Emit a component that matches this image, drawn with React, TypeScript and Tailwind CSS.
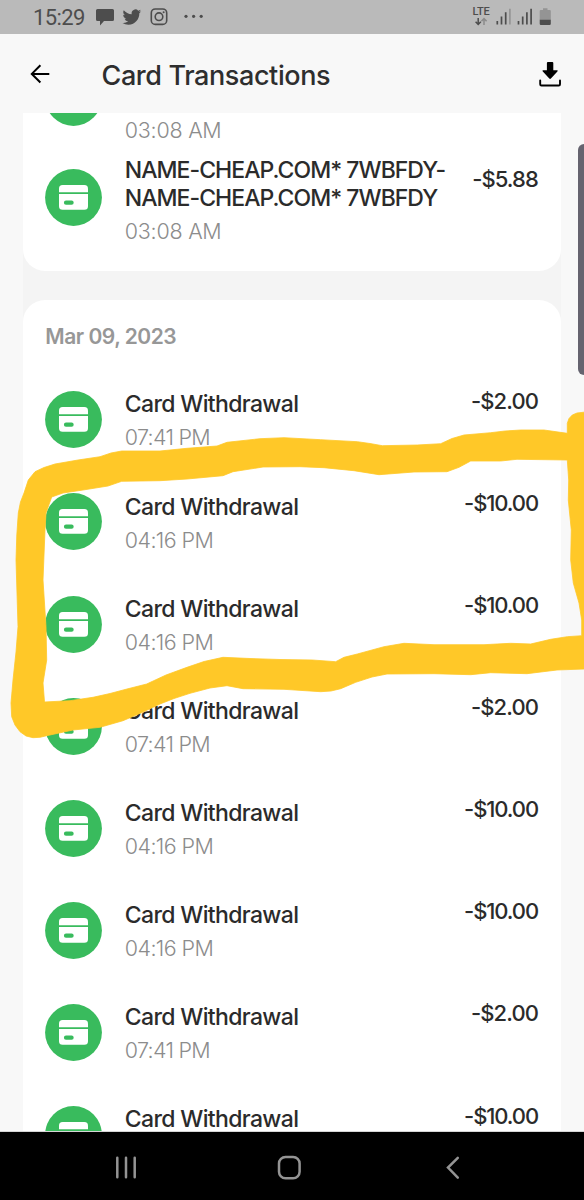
import React from "react";

const FONT = "font-['Inter','Liberation_Sans',sans-serif]";

function CardIcon() {
  return (
    <svg viewBox="0 0 57 57" className="block h-[57px] w-[57px] shrink-0">
      <circle cx="28.5" cy="28.5" r="28.4" fill="#39bb5d" />
      <path d="M14 23.3v-3.6a3.6 3.6 0 0 1 3.6-3.6h21.8a3.6 3.6 0 0 1 3.6 3.6v3.6z" fill="#fff" />
      <path
        fillRule="evenodd"
        d="M14 24.9h29v12.3a3.6 3.6 0 0 1-3.6 3.6H17.6a3.6 3.6 0 0 1-3.6-3.6zM21 31.6a2.1 2.1 0 0 0 0 4.2h5.6a2.1 2.1 0 0 0 0-4.2z"
        fill="#fff"
      />
    </svg>
  );
}

function Time({ children }: { children: string }) {
  const spacing = children.startsWith("07") ? "tracking-[-0.7px]" : children.startsWith("03") ? "tracking-[-0.25px]" : "tracking-[-0.6px]";
  return <div className={`text-[21.5px] leading-[28px] font-light whitespace-nowrap text-[#8c8c8c] ${spacing}`}>{children}</div>;
}

function Amount({ children }: { children: string }) {
  const spacing = children.length > 6 ? "tracking-[-1.1px]" : "tracking-[-0.9px]";
  return <div className={`text-[22px] leading-[28px] font-medium whitespace-nowrap text-[#2b2b2b] ${spacing}`}>{children}</div>;
}

function Withdrawal({ time, amount }: { time: string; amount: string }) {
  return (
    <div className="flex h-[102.17px] shrink-0 items-start">
      <div className="pt-[4.8px]">
        <CardIcon />
      </div>
      <div className="ml-[22.5px] flex flex-1 flex-col gap-[4.2px] pt-[3.9px]">
        <div className="text-[23px] leading-[28.8px] font-medium tracking-[-0.65px] whitespace-nowrap text-[#2b2b2b]">Card Withdrawal</div>
        <Time>{time}</Time>
      </div>
      <Amount>{amount}</Amount>
    </div>
  );
}

const entries = [
  ["07:41 PM", "-$2.00"],
  ["04:16 PM", "-$10.00"],
  ["04:16 PM", "-$10.00"],
  ["07:41 PM", "-$2.00"],
  ["04:16 PM", "-$10.00"],
  ["04:16 PM", "-$10.00"],
  ["07:41 PM", "-$2.00"],
];

function StatusBar() {
  return (
    <div className="flex h-[34px] shrink-0 items-center bg-[#bababa] pr-[32px] pl-[33px] text-[#4d4d4d]">
      <span className="w-[52px] pt-px font-['Roboto',sans-serif] text-[22px] leading-[34px] tracking-[-0.6px] whitespace-nowrap">15:29</span>
      <svg viewBox="0 0 112 34" className="ml-[9px] h-[34px] w-[112px]">
        <path d="M3.500 9h15a1.500 1.500 0 0 1 1.500 1.500v9a1.500 1.500 0 0 1-1.500 1.500h-8.500l-4 4.500v-4.500h-2.500a1.500 1.500 0 0 1-1.500-1.500v-9a1.500 1.500 0 0 1 1.500-1.500z" fill="#4d4d4d" />
        <g transform="translate(28.500 7.700) scale(0.78)">
          <path
            d="M23.950 4.570a10 10 0 0 1-2.820.770 4.960 4.960 0 0 0 2.160-2.720c-.950.550-2 .950-3.130 1.180a4.920 4.920 0 0 0-8.380 4.480C7.690 8.090 4.070 6.130 1.640 3.160a4.820 4.820 0 0 0-.670 2.480c0 1.710.870 3.210 2.190 4.100a4.900 4.900 0 0 1-2.230-.620v.060a4.920 4.920 0 0 0 3.950 4.830 5 5 0 0 1-2.210.080 4.940 4.940 0 0 0 4.600 3.420A9.870 9.870 0 0 1 0 19.540a13.990 13.990 0 0 0 7.550 2.210c9.050 0 14-7.500 14-13.980 0-.210 0-.420-.020-.630a9.940 9.940 0 0 0 2.420-2.570z"
            fill="#4d4d4d"
          />
        </g>
        <g fill="none" stroke="#4d4d4d" strokeWidth="1.600">
          <rect x="57.300" y="9" width="15.400" height="15.400" rx="4" />
          <circle cx="65" cy="16.700" r="3.800" />
        </g>
        <circle cx="69.600" cy="12.200" r="1" fill="#4d4d4d" />
        <circle cx="92" cy="16.300" r="1.600" fill="#4d4d4d" />
        <circle cx="99.600" cy="16.300" r="1.600" fill="#4d4d4d" />
        <circle cx="107.200" cy="16.300" r="1.600" fill="#4d4d4d" />
      </svg>
      <div className="ml-auto flex h-[34px] items-start">
        <div className="flex w-[18px] flex-col items-center pt-[7px]">
          <span className="font-['Roboto',sans-serif] text-[11px] leading-[10px] font-medium tracking-[-0.200px]">LTE</span>
          <svg viewBox="0 0 14 9" className="h-[9px] w-[14px]">
            <path d="M4.200 1v6M1.600 4.800l2.600 2.700 2.600-2.700" fill="none" stroke="#4d4d4d" strokeWidth="1.500" />
            <path d="M10 8V2M7.400 4.200L10 1.500l2.600 2.700" fill="none" stroke="#8b8b8b" strokeWidth="1.500" />
          </svg>
        </div>
        <svg viewBox="0 0 57 34" className="ml-[5px] h-[34px] w-[57px]">
          <g strokeWidth="1.700" stroke="#4d4d4d">
            <path d="M2.300 24.500v-3.500M6.500 24.500v-8M10.700 24.500V12.300M23.500 24.500v-3.500M27.700 24.500v-8M31.900 24.500V12.300M36.100 24.500V8.800" />
            <path d="M14.900 24.500V8.800" stroke="#949494" />
          </g>
          <path d="M44.700 11a1 1 0 0 1 1-1h2.300V8.200h4.500V10h2.300a1 1 0 0 1 1 1v9H44.700z" fill="#949494" />
          <path d="M44.700 19.800h11.100v3.900a1.200 1.200 0 0 1-1.200 1.200h-8.700a1.200 1.200 0 0 1-1.200-1.200z" fill="#4d4d4d" />
        </svg>
      </div>
    </div>
  );
}

const MARKER =
  "M35 471.7L44 467.500L55 464L78 460L100 456.700L111 453L121.700 451L160 451L187 448.300L217 446L227 442.300L260 438.700L284 437.700L320.700 439.700L357.300 441.700L370 443.500L382.300 445.700L417.300 445L440.700 443.700L452 438.500L464 435L490.700 432.700L505 431L520.700 430L544 430L567.300 433.300L567.300 423.300L569 418.500L572.300 415L577 413L590 411.500L590 669L584 669L557 670L527 673.700L490.700 672.700L470.700 674.700L434 673.700L387 674L372 677L355.700 682.300L340.700 688.700L331 691L320.700 691.700L284 689.300L243 688.700L227 685.700L210 688L190 693.300L174 698.500L160 704L142 712.500L123 720.700L100 727.300L73 730L46.700 735.700L40 737.300L33 737.700L26 736L20 731.700L15 725L11.700 716.700L11 703L13 680L16 652L18 626.700L16 560L16.800 535L18.300 513L20.500 502L24 493L28.300 480Z" +
  "M51.700 497L46 513L45 530L43 580L46 626.700L46.700 660L43 683L44.500 702L70 700.700L93 697.300L110 693.500L127 689L146.700 684L166 675L187 667.300L204 661.500L223 657.300L250 658.500L280 659.500L312.300 660L335.700 661.700L344 657.300L357.300 654L384 646.700L404 643.300L434 644.700L484 644.700L510.700 643.300L530.700 644L550.700 639.300L567.300 636.700L581.700 635.700L581.700 620L579 603L573.300 583L570.700 560L571.300 530L568.300 500L568.700 480L567.300 460L517 459.300L500.700 461L470.700 461L459 467.300L447 471.700L414 472L379 474.700L354 470.700L324 467.700L300 466.700L263 467L233 471.700L223 475.700L187 479L160 480.700L121.700 481.300L108 486L83 490L63 493Z";

export default function App() {
  return (
    <div className={`relative flex h-[1200px] w-[584px] flex-col overflow-hidden bg-[#f8f8f8] ${FONT}`}>
      <StatusBar />
      <header className="flex h-[79px] shrink-0 items-start pl-[30px]">
        <svg viewBox="0 0 20 20" className="mt-[30px] h-[20px] w-[20px]">
          <path d="M19.300 9.900H2M10.400 1.300L1.800 9.900l8.600 8.600" fill="none" stroke="#000" strokeWidth="2" />
        </svg>
        <h1 className="ml-[51.500px] pt-[26px] text-[27px] leading-[32px] font-medium tracking-[-0.400px] whitespace-nowrap text-[#2e2e2e]">Card Transactions</h1>
        <svg viewBox="0 0 24 26" className="mt-[27px] mr-[22px] ml-auto h-[26px] w-[24px]">
          <path d="M8.900 2a1 1 0 0 1 1-1h4.400a1 1 0 0 1 1 1v7.200h3.700c.700 0 .900.700.400 1.200l-6.500 7.100a1.100 1.100 0 0 1-1.600 0l-6.500-7.100c-.500-.500-.300-1.200.400-1.200h3.700z" fill="#000" />
          <path d="M2.200 19.500v3.700a1.300 1.300 0 0 0 1.300 1.300h17.200a1.300 1.300 0 0 0 1.300-1.300v-3.700" fill="none" stroke="#000" strokeWidth="1.900" strokeLinecap="round" />
        </svg>
      </header>

      <main className="flex h-[1018px] shrink-0 flex-col overflow-hidden px-[23px]">
        <div className="flex shrink-0 flex-col bg-[#f2f2f2]/80">
          <section className="-mt-[60px] flex h-[218px] shrink-0 flex-col rounded-[22px] bg-white pr-[23px] pl-[22.300px]">
            <div className="flex h-[102px] shrink-0 items-start">
              <div className="pt-[15.700px]">
                <CardIcon />
              </div>
              <div className="ml-[22.500px] pt-[63.200px]">
                <Time>03:08 AM</Time>
              </div>
            </div>
            <div className="flex items-start">
              <div className="pt-[14.300px]">
                <CardIcon />
              </div>
              <div className="ml-[22.500px] flex flex-1 flex-col gap-[3.500px] pt-[0.600px]">
                <div className="text-[23px] leading-[28.800px] font-medium tracking-[-0.960px] whitespace-nowrap text-[#2b2b2b]">
                  NAME-CHEAP.COM* 7WBFDY-
                  <br />
                  NAME-CHEAP.COM* 7WBFDY
                </div>
                <Time>03:08 AM</Time>
              </div>
              <div className="pt-[9.800px]">
                <Amount>-$5.88</Amount>
              </div>
            </div>
          </section>
          <div className="h-[28.500px] shrink-0" />
          <section className="flex h-[860px] shrink-0 flex-col rounded-t-[22px] bg-white pr-[23px] pl-[22.300px] pt-[23px]">
            <h2 className="h-[64px] shrink-0 text-[21px] leading-[28px] font-semibold tracking-[-0.480px] text-[#979797]">Mar 09, 2023</h2>
            {entries.map(([time, amount], i) => (
              <Withdrawal key={i} time={time} amount={amount} />
            ))}
            <div className="flex shrink-0 items-start">
              <div className="pt-[4.800px]">
                <CardIcon />
              </div>
              <div className="ml-[22.500px] flex-1 pt-[3.900px] text-[23px] leading-[28.800px] font-medium tracking-[-0.650px] whitespace-nowrap text-[#2b2b2b]">Card Withdrawal</div>
              <Amount>-$10.00</Amount>
            </div>
          </section>
        </div>
      </main>

      <nav className="h-[69px] shrink-0 border-t border-[#d5d5d5] bg-black">
        <svg viewBox="0 0 584 68" className="block h-[68px] w-[584px]">
          <g fill="none" stroke="#949494" strokeLinecap="round">
            <path d="M117.300 25.800v19.400M126 25.800v19.400M134.700 25.800v19.400" strokeWidth="2.500" />
            <rect x="279" y="25" width="20.600" height="21.200" rx="6.500" strokeWidth="2.500" />
            <path d="M457.800 25.800L448 35.600l9.800 10" strokeWidth="2.500" />
          </g>
        </svg>
      </nav>

      <div className="absolute top-[144px] right-0 h-[231px] w-[6px] rounded-l-[6px] bg-[#65636f]" />
      <svg viewBox="0 0 584 1200" className="pointer-events-none absolute inset-0 h-[1200px] w-[584px]">
        <path d={MARKER} fill="#ffc828" fillRule="evenodd" stroke="#ffc828" strokeWidth="0.800" strokeLinejoin="round" />
      </svg>
    </div>
  );
}
